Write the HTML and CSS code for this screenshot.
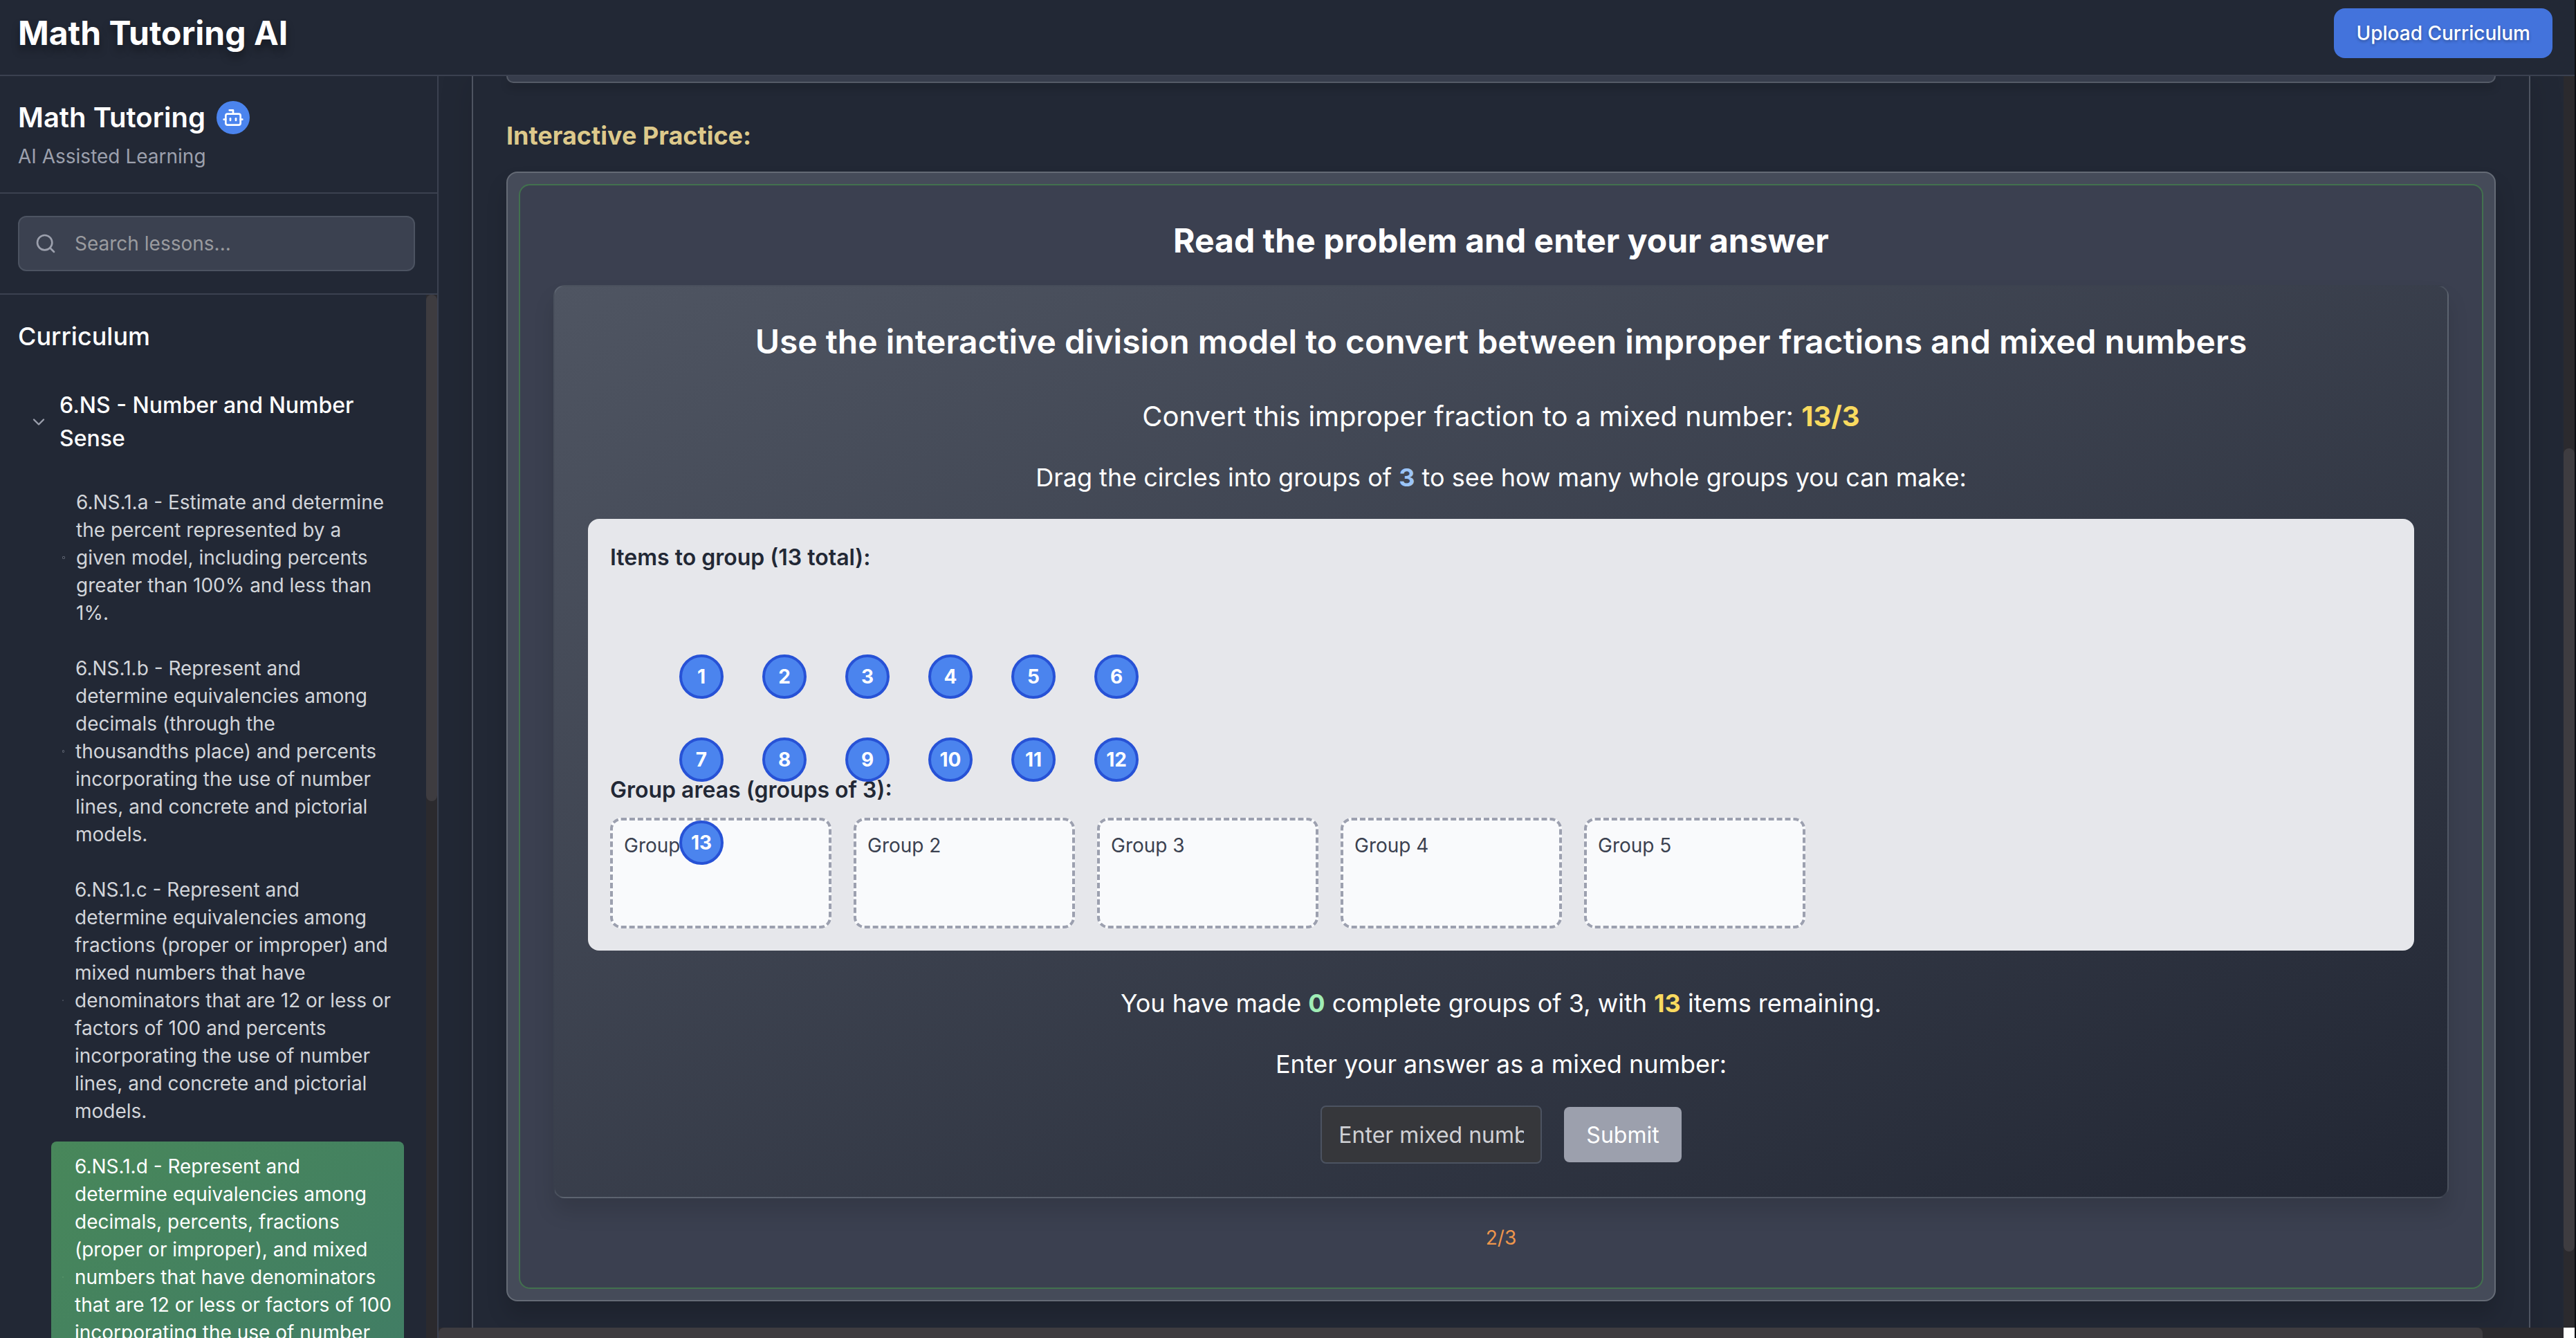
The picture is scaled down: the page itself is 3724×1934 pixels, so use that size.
FILE: index.html
```html
<!DOCTYPE html>
<html lang="en">
<head>
<meta charset="utf-8">
<title>Math Tutoring AI</title>
<link rel="stylesheet" href="styles.css">
</head>
<body>
<div class="app">
  <header class="topbar">
    <h1 class="brand">Math Tutoring AI</h1>
    <button class="upload" type="button">Upload Curriculum</button>
  </header>
  <div class="workspace">
    <aside class="sidebar">
      <div class="side-head">
        <div class="side-title">
          <h2>Math Tutoring</h2>
          <span class="bot">
            <svg viewBox="0 0 24 24" aria-hidden="true"><path d="M12 8V4H8"/><rect width="16" height="12" x="4" y="8" rx="2"/><path d="M2 14h2"/><path d="M20 14h2"/><path d="M15 13v2"/><path d="M9 13v2"/></svg>
          </span>
        </div>
        <p class="side-sub">AI Assisted Learning</p>
      </div>
      <div class="side-search">
        <label class="search-box">
          <svg viewBox="0 0 24 24" aria-hidden="true"><circle cx="11" cy="11" r="8"/><path d="m21 21-4.3-4.3"/></svg>
          <input type="search" placeholder="Search lessons..." aria-label="Search lessons">
        </label>
      </div>
      <div class="side-scroll">
        <nav class="curriculum">
          <h3>Curriculum</h3>
          <button class="module" type="button">
            <svg viewBox="0 0 24 24" aria-hidden="true"><path d="m6 9 6 6 6-6"/></svg>
            <span>6.NS - Number and Number Sense</span>
          </button>
          <ul class="lessons">
            <li><a class="lesson" href="#a"><i class="dot"></i><span>6.NS.1.a - Estimate and determine the percent represented by a given model, including percents greater than 100% and less than 1%.</span></a></li>
            <li><a class="lesson" href="#b"><i class="dot small"></i><span>6.NS.1.b - Represent and determine equivalencies among decimals (through the thousandths place) and percents incorporating the use of number lines, and concrete and pictorial models.</span></a></li>
            <li><a class="lesson" href="#c"><i class="dot tiny"></i><span>6.NS.1.c - Represent and determine equivalencies among fractions (proper or improper) and mixed numbers that have denominators that are 12 or less or factors of 100 and percents incorporating the use of number lines, and concrete and pictorial models.</span></a></li>
            <li><a class="lesson active" href="#d"><i class="dot tiny"></i><span>6.NS.1.d - Represent and determine equivalencies among decimals, percents, fractions (proper or improper), and mixed numbers that have denominators that are 12 or less or factors of 100 incorporating the use of number lines, and concrete and pictorial models.</span></a></li>
          </ul>
        </nav>
        <div class="track side-track"><div class="thumb"></div></div>
      </div>
    </aside>
    <main class="main">
      <div class="content">
        <section class="lesson-card">
          <div class="previous-panel"></div>
          <h2 class="section-title">Interactive Practice:</h2>
          <div class="practice">
            <div class="practice-inner">
              <h3 class="prompt">Read the problem and enter your answer</h3>
              <div class="question">
                <h4 class="question-title">Use the interactive division model to convert between improper fractions and mixed numbers</h4>
                <p class="convert">Convert this improper fraction to a mixed number: <b class="yellow">13/3</b></p>
                <p class="line">Drag the circles into groups of <b class="blue">3</b> to see how many whole groups you can make:</p>
                <div class="model">
                  <h5>Items to group (13 total):</h5>
                  <div class="canvas">
                    <span class="item c1 r1">1</span><span class="item c2 r1">2</span><span class="item c3 r1">3</span><span class="item c4 r1">4</span><span class="item c5 r1">5</span><span class="item c6 r1">6</span>
                    <span class="item c1 r2">7</span><span class="item c2 r2">8</span><span class="item c3 r2">9</span><span class="item c4 r2">10</span><span class="item c5 r2">11</span><span class="item c6 r2">12</span>
                    <span class="item c1 r3">13</span>
                  </div>
                  <h5 class="areas-title">Group areas (groups of 3):</h5>
                  <div class="groups">
                    <div class="group">Group 1</div>
                    <div class="group">Group 2</div>
                    <div class="group">Group 3</div>
                    <div class="group">Group 4</div>
                    <div class="group">Group 5</div>
                  </div>
                </div>
                <p class="line status">You have made <b class="green">0</b> complete groups of 3, with <b class="yellow">13</b> items remaining.</p>
                <label class="line" for="answer">Enter your answer as a mixed number:</label>
                <form class="answer-row">
                  <input id="answer" type="text" placeholder="Enter mixed number">
                  <button type="submit" disabled>Submit</button>
                </form>
              </div>
              <p class="progress"><span>2/3</span></p>
            </div>
          </div>
        </section>
      </div>
      <div class="track main-vtrack"><div class="thumb"></div></div>
      <div class="track main-htrack"><div class="thumb"></div></div>
      <div class="corner"></div>
    </main>
  </div>
</div>
</body>
</html>
```
FILE: styles.css
```css
* { box-sizing: border-box; }

body, h1, h2, h3, h4, h5, p, ul { margin: 0; }

body {
  background: #0c0e13;
  color: #fff;
  font-family: Inter, "Liberation Sans", sans-serif;
  font-size: 32px;
  line-height: 48px;
}

button, input { font-family: inherit; margin: 0; }

svg {
  fill: none;
  stroke: currentColor;
  stroke-width: 2;
  stroke-linecap: round;
  stroke-linejoin: round;
  flex: none;
}

.app {
  display: flex;
  flex-direction: column;
  height: 100vh;
  margin-right: 2px;
  background: #222835;
  overflow: hidden;
}

/* Top bar */
.topbar {
  display: flex;
  justify-content: space-between;
  align-items: center;
  padding: 12px 32px 24px 26px;
  border-bottom: 2px solid #3b4150;
}

.brand {
  font-size: 48px;
  line-height: 64px;
  font-weight: 700;
  text-shadow: 0 8px 12px rgba(0, 0, 0, 0.35);
}

.upload {
  height: 72px;
  padding: 0 32px;
  border: 0;
  border-radius: 16px;
  background: #4373dc;
  color: #fff;
  font-size: 28px;
  font-weight: 500;
  text-shadow: 0 2px 4px rgba(0, 0, 0, 0.3);
}

.workspace {
  display: flex;
  flex: 1;
  min-height: 0;
}

/* Sidebar */
.sidebar {
  display: flex;
  flex-direction: column;
  flex: none;
  width: 634px;
  border-right: 2px solid #3b4150;
}

.side-head {
  padding: 32px 32px 32px 26px;
  border-bottom: 2px solid #3b4150;
}

.side-title {
  display: flex;
  align-items: center;
  gap: 16px;
}

.side-title h2 {
  font-size: 40px;
  line-height: 56px;
  font-weight: 600;
}

.bot {
  display: flex;
  align-items: center;
  justify-content: center;
  width: 48px;
  height: 48px;
  border-radius: 50%;
  background: #4b84ee;
}

.bot svg { width: 32px; height: 32px; }

.side-sub {
  margin-top: 8px;
  font-size: 28px;
  line-height: 40px;
  color: #9ca0ad;
}

.side-search {
  padding: 32px 32px 32px 26px;
  border-bottom: 2px solid #3b4150;
}

.search-box {
  display: flex;
  align-items: center;
  gap: 26px;
  height: 80px;
  padding: 0 22px;
  border: 2px solid #4c5361;
  border-radius: 12px;
  background: #3b4150;
}

.search-box svg { width: 32px; height: 32px; color: #9ca0ad; }

.search-box input {
  flex: 1;
  min-width: 0;
  padding: 0;
  border: 0;
  outline: 0;
  background: none;
  color: #fff;
  font-size: 28px;
  line-height: 40px;
  appearance: none;
}

.search-box input::placeholder { color: #9a9b9f; }

.side-scroll {
  display: flex;
  flex: 1;
  min-height: 0;
  overflow: hidden;
}

.curriculum {
  flex: 1;
  min-width: 0;
  padding: 32px 32px 32px 26px;
}

.curriculum h3 {
  font-size: 36px;
  line-height: 56px;
  font-weight: 500;
}

.module {
  display: flex;
  align-items: center;
  gap: 16px;
  width: 100%;
  margin: 32px 0 16px;
  padding: 16px;
  border: 0;
  background: none;
  color: #fff;
  font-size: 32px;
  line-height: 48px;
  font-weight: 500;
  text-align: left;
}

.module svg { width: 28px; height: 28px; color: #9ca0ad; }

.lessons {
  display: flex;
  flex-direction: column;
  gap: 8px;
  padding: 0 0 0 48px;
  list-style: none;
}

.lesson {
  display: flex;
  align-items: center;
  gap: 16px;
  padding: 16px;
  border-radius: 8px;
  color: #d2d5da;
  font-size: 28px;
  line-height: 40px;
  text-decoration: none;
}

.lesson.active {
  color: #fff;
  background: linear-gradient(to right bottom, #48875a, #407c66);
}

.dot {
  flex: none;
  width: 4px;
  height: 4px;
  border: 1px solid #5b616e;
  border-radius: 1px;
}

.dot.small { width: 3px; }

.dot.tiny { width: 2px; height: 2px; }

.active .dot { border-color: #5f996f; }

/* Scroll bars */
.track { background: #2b2a2e; overflow: hidden; }

.thumb { background: #3e3c40; border-radius: 8px; }

.side-track { flex: none; width: 16px; }

.side-track .thumb { height: 732px; }

/* Main */
.main {
  flex: 1;
  min-width: 0;
  display: grid;
  grid-template-columns: minmax(0, 1fr) 16px;
  grid-template-rows: minmax(0, 1fr) 15px;
}

.content {
  padding: 0 48px;
  overflow: hidden;
}

.main-vtrack { padding-top: 538px; }

.main-vtrack .thumb { height: 1161px; }

.main-htrack { padding-right: 117px; }

.main-htrack .thumb { height: 32px; }

.corner { background: #fff; }

.lesson-card {
  padding: 0 48px 96px;
  border: solid #4e5461;
  border-width: 0 2px;
  box-shadow: 0 0 48px rgba(0, 0, 0, 0.12);
}

.previous-panel {
  height: 10px;
  border: solid #555b67;
  border-width: 0 2px 2px;
  border-radius: 0 0 16px 16px;
  background: #373d4c;
  box-shadow: 0 8px 12px rgba(0, 0, 0, 0.15);
}

.section-title {
  margin: 48px 0 24px;
  font-size: 36px;
  line-height: 56px;
  font-weight: 700;
  color: #ddc98b;
}

.practice {
  padding: 16px;
  border: 2px solid #656b76;
  border-radius: 16px;
  background: #454b59;
  box-shadow: 0 20px 30px rgba(0, 0, 0, 0.15);
}

.practice-inner {
  padding: 48px;
  border: 2px solid #42714e;
  border-radius: 16px;
  background: #3b4050;
  text-align: center;
}

.prompt {
  margin-bottom: 32px;
  font-size: 48px;
  line-height: 64px;
  font-weight: 700;
}

.question {
  padding: 48px;
  border: 2px solid rgba(156, 163, 175, 0.19);
  border-radius: 16px;
  background: linear-gradient(to right bottom, #4f5562, #222734);
  box-shadow: 0 20px 30px rgba(0, 0, 0, 0.12);
}

.question-title {
  font-size: 48px;
  line-height: 64px;
  font-weight: 600;
}

.convert {
  margin: 48px 0 32px;
  font-size: 40px;
  line-height: 56px;
}

.line {
  display: block;
  font-size: 36px;
  line-height: 56px;
}

.yellow { color: #f9da5f; }
.blue { color: #9cc5f8; }
.green { color: #a0edb5; }

.model {
  margin: 32px 0 48px;
  padding: 32px;
  border-radius: 16px;
  background: #e6e7eb;
  color: #222835;
  text-align: left;
}

.model h5 {
  font-size: 32px;
  line-height: 48px;
  font-weight: 600;
}

.canvas {
  position: relative;
  height: 240px;
  margin: 16px 0 32px;
}

.item {
  position: absolute;
  z-index: 1;
  display: flex;
  align-items: center;
  justify-content: center;
  width: 64px;
  height: 64px;
  border: 4px solid #2752d6;
  border-radius: 50%;
  background: #4b84ee;
  color: #fff;
  font-size: 28px;
  line-height: 40px;
  font-weight: 700;
}

.c1 { left: 100px; }
.c2 { left: 220px; }
.c3 { left: 340px; }
.c4 { left: 460px; }
.c5 { left: 580px; }
.c6 { left: 700px; }
.r1 { top: 100px; }
.r2 { top: 220px; }
.r3 { top: 340px; }

.model .areas-title { margin-bottom: 16px; }

.groups {
  display: flex;
  flex-wrap: wrap;
  gap: 32px;
}

.group {
  width: 320px;
  height: 160px;
  padding: 16px;
  border: 4px dashed #9ca0af;
  border-radius: 16px;
  background: #f9fafc;
  color: #3b4150;
  font-size: 28px;
  line-height: 40px;
}

.status { margin-bottom: 32px; }

.answer-row {
  display: flex;
  justify-content: center;
  align-items: center;
  gap: 32px;
  margin-top: 32px;
}

.answer-row input {
  width: 320px;
  height: 84px;
  padding: 0 24px;
  border: 2px solid #4c5361;
  border-radius: 8px;
  background: #36373b;
  color: #fff;
  font-size: 32px;
}

.answer-row input::placeholder { color: #d0d1d5; }

.answer-row button {
  height: 80px;
  padding: 0 32px;
  border: 0;
  border-radius: 8px;
  background: #9ca0ad;
  color: #fff;
  font-size: 32px;
}

.progress {
  margin-top: 32px;
  color: #ee964c;
}

.progress span { font-size: 28px; }
```
